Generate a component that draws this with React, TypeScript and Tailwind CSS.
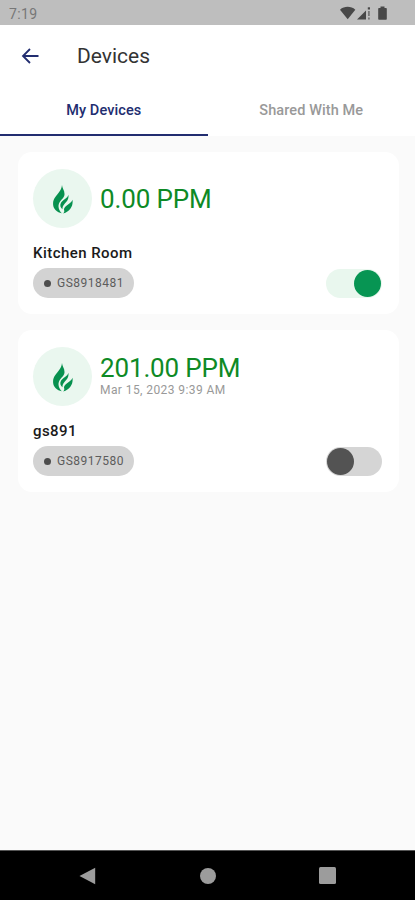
import { useState } from "react"

type Device = {
  id: string
  name: string
  ppm: string
  updated?: string
  on: boolean
}

const initialDevices: Device[] = [
  { id: "GS8918481", name: "Kitchen Room", ppm: "0.00", on: true },
  { id: "GS8917580", name: "gs891", ppm: "201.00", updated: "Mar 15, 2023 9:39 AM", on: false },
]

const StatusBar = () => (
  <div className="flex h-[25px] items-center justify-between bg-[#bebebe] pt-[2px] pl-[9px] pr-[28px]">
    <span className="text-[14px] leading-none tracking-[0.4px] text-[#777777]">7:19</span>
    <svg width="47" height="15" viewBox="0 0 47 15" fill="#484848">
      <path d="M0 3.7C4.3 -0.1 11 -0.1 15.3 3.7L7.7 13.2Z" />
      <path d="M17 13.5L26 4.5V13.5Z" />
      <rect x="27.8" y="1.3" width="2.2" height="2.2" />
      <path d="M28 5h1.8v5H28zM28 11.5h1.8v2H28z" opacity="0.6" />
      <path d="M40.5 0.5h4v1.5h1.5a.8.8 0 0 1 .8.8v10.2a.8.8 0 0 1-.8.8h-7a.8.8 0 0 1-.8-.8V2.8a.8.8 0 0 1 .8-.8h1.5z" />
    </svg>
  </div>
)

const FlameIcon = () => (
  <svg width="20" height="29" viewBox="0 0 20 29" fill="#07914f">
    <path d="M9 0C9 3 11.8 5.5 11.5 9.5C11.2 13.5 6.3 15.5 5.6 20C5.1 23.2 6.5 25.8 8.8 28.3C4 27.3 .4 24 .1 19.5C-.3 14 3.2 11.2 5.8 7.6C7.6 5.1 8.8 2.8 9 0Z" />
    <path d="M15.4 9.8C15.8 12.8 15.2 14.6 13.4 16.8C11.2 19.4 9.3 20.8 9.4 24.3C7.2 22.4 6.7 20.2 8 17.8C9.8 14.6 14.6 13.6 15.4 9.8Z" />
    <path d="M19.5 14.8C20.3 20.5 17.6 26 10.2 28.6C11.8 26.8 11.2 25.9 11 24.6C10.8 22.6 12.6 21.4 14.4 19.9C16.7 18.1 18.9 17.2 19.5 14.8Z" />
  </svg>
)

const DeviceCard = ({ device, onToggle }: { device: Device; onToggle: () => void }) => (
  <div className="h-[162px] rounded-[14px] bg-white pt-4 pl-[15px] pr-[17px]">
    <div className="flex h-[60px] items-center">
      <div className="flex size-[59px] items-center justify-center rounded-full bg-[#eaf7ef] pt-[2px]">
        <FlameIcon />
      </div>
      <div className="ml-[8px] pt-px">
        <div className="text-[26px] leading-[28px] tracking-[-0.15px] text-[#0e8a25]">{device.ppm} PPM</div>
        {device.updated && (
          <div className="text-[12px] leading-[17px] tracking-[0.42px] text-[#999999]">{device.updated}</div>
        )}
      </div>
    </div>
    <div className="mt-[14px] text-[15px] leading-[22px] font-medium tracking-[0.45px] text-[#1a1a1a]">{device.name}</div>
    <div className="mt-[4px] flex items-center justify-between">
      <div className="flex h-[30px] w-[101px] items-center rounded-full bg-[#d3d3d3] pl-[11px]">
        <span className="size-[7px] rounded-full bg-[#4d4d4d]" />
        <span className="ml-[6px] text-[12px] tracking-[0.5px] text-[#5c5c5c]">{device.id}</span>
      </div>
      <button
        onClick={onToggle}
        className={`flex h-[29px] w-[56px] items-center rounded-full px-px ${device.on ? "justify-end bg-[#e9f7ee]" : "justify-start bg-[#d5d5d5]"}`}
      >
        <span className={`size-[27px] rounded-full ${device.on ? "bg-[#079553]" : "bg-[#535353]"}`} />
      </button>
    </div>
  </div>
)

export default function App() {

  const [ devices, setDevices ] = useState<Device[]>(initialDevices)
  const [ tab, setTab ] = useState(0)

  const toggle = (id: string) => {
    setDevices(prev => prev.map(d => d.id === id ? { ...d, on: !d.on } : d))
  }

  return (
    <div className="flex h-[900px] w-[415px] flex-col overflow-hidden bg-[#fafafa] font-['Roboto','Liberation_Sans',sans-serif]">
      <StatusBar />

      <div className="bg-white">
        <div className="flex h-[61px] items-center pl-[21px]">
          <svg width="18" height="16" viewBox="0 0 18 16" fill="none" stroke="#222d70" strokeWidth="1.8">
            <path d="M17.5 8H2M9 1L2 8L9 15" />
          </svg>
          <h1 className="ml-[38px] pt-[2px] text-[21px] leading-none text-[#333333]">Devices</h1>
        </div>
        <div className="flex h-[50px]">
          {["My Devices", "Shared With Me"].map((label, index) => (
            <button
              key={label}
              onClick={() => setTab(index)}
              className={`h-full flex-1 border-b-2 pt-px text-[14.5px] font-medium tracking-[0.1px] ${tab === index ? "border-[#222d70] text-[#222d70]" : "border-transparent text-[#999999]"}`}
            >
              {label}
            </button>
          ))}
        </div>
      </div>

      <div className="flex flex-1 flex-col gap-4 pt-4 pl-[18px] pr-[16px]">
        {devices.map(device => (
          <DeviceCard key={device.id} device={device} onToggle={() => toggle(device.id)} />
        ))}
      </div>

      <div className="flex h-[50px] items-center justify-between border-t border-[#555555] bg-black pl-[79px] pr-[79px]">
        <svg width="17" height="18" viewBox="0 0 17 18" fill="#9c9c9c">
          <path d="M.5 9L16.2 .7V17.3Z" />
        </svg>
        <div className="size-4 rounded-full bg-[#9c9c9c]" />
        <div className="size-[17px] rounded-[1.5px] bg-[#9c9c9c]" />
      </div>
    </div>
  )
}
